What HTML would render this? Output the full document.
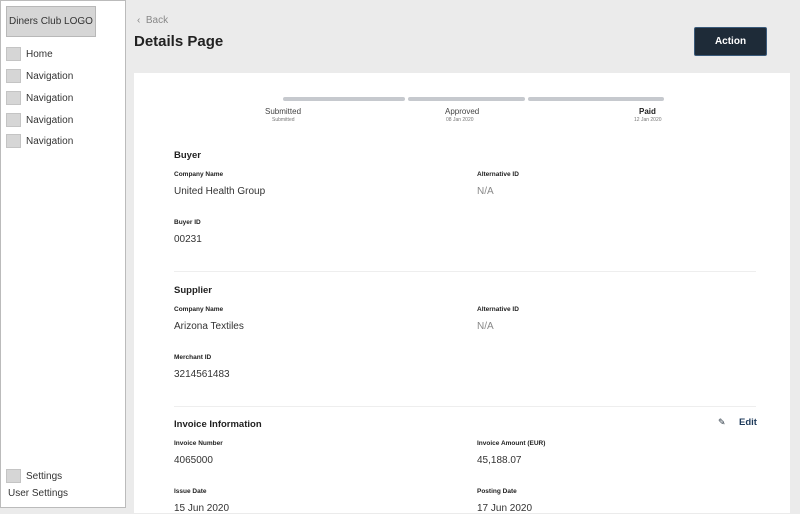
<!DOCTYPE html>
<html><head><style>
*{margin:0;padding:0;box-sizing:border-box}
body{width:800px;height:508px;overflow:hidden;background:#ebebeb;font-family:"Liberation Sans",sans-serif;color:#222;position:relative}
.sb{position:absolute;left:0;top:0;width:126px;height:508px;background:#fff;border:1px solid #bbb}
.logo{position:absolute;left:5px;top:5px;width:90px;height:31px;background:#d6d6d6;border:1px solid #b8b8b8;font-size:10px;text-align:center;line-height:29px;color:#333}
.nav{position:absolute;left:5px;font-size:10px;color:#333;display:flex;align-items:center}
.nav i{display:inline-block;width:15px;height:14px;background:#d6d6d6;border:1px solid #c4c4c4;margin-right:5px}
.abs{position:absolute}
.card{position:absolute;left:134px;top:73px;width:656px;height:440px;background:#fff}
.lbl{position:absolute;font-size:6.5px;font-weight:bold;color:#222}
.val{position:absolute;font-size:10px;color:#333}
.h{position:absolute;font-size:9.5px;font-weight:bold}
.hr{position:absolute;left:40px;width:582px;height:1px;background:#eee}
.seg{position:absolute;top:24px;height:4px;background:#c6c9ce;border-radius:2px}
.in{position:absolute;left:0;top:1px;width:100%;height:100%}
</style></head><body>
<div class="sb">
<div class="logo">Diners Club LOGO</div>
<div class="nav" style="top:46px"><i></i>Home</div>
<div class="nav" style="top:68px"><i></i>Navigation</div>
<div class="nav" style="top:90px"><i></i>Navigation</div>
<div class="nav" style="top:112px"><i></i>Navigation</div>
<div class="nav" style="top:133px"><i></i>Navigation</div>
<div class="nav" style="top:468px"><i></i>Settings</div>
<div class="abs" style="left:7px;top:487px;font-size:10px;color:#333">User Settings</div>
</div>
<div class="abs" style="left:137px;top:15px;font-size:10px;color:#888">‹&nbsp; Back</div>
<div class="abs" style="left:134px;top:33px;font-size:15px;font-weight:bold">Details Page</div>
<div class="abs" style="left:694px;top:27px;width:73px;height:29px;background:#1e2b38;border:1px solid #3a5a7a;border-radius:2px;color:#fff;font-size:10px;font-weight:bold;text-align:center;line-height:27px">Action</div>
<div class="card"><div class="in">
<div class="seg" style="left:149px;width:122px;top:23px"></div>
<div class="seg" style="left:274px;width:117px;top:23px"></div>
<div class="seg" style="left:394px;width:136px;top:23px"></div>
<div class="abs" style="left:131px;top:33px;font-size:8px;color:#444">Submitted</div>
<div class="abs" style="left:138px;top:43px;font-size:5px;color:#777">Submitted</div>
<div class="abs" style="left:311px;top:33px;font-size:8px;color:#444">Approved</div>
<div class="abs" style="left:312px;top:43px;font-size:5px;color:#777">08 Jan 2020</div>
<div class="abs" style="left:505px;top:33px;font-size:8px;font-weight:bold">Paid</div>
<div class="abs" style="left:500px;top:43px;font-size:5px;color:#777">12 Jan 2020</div>

<div class="h" style="left:40px;top:76px">Buyer</div>
<div class="lbl" style="left:40px;top:97px">Company Name</div>
<div class="val" style="left:40px;top:112px">United Health Group</div>
<div class="lbl" style="left:343px;top:97px">Alternative ID</div>
<div class="val" style="left:343px;top:112px;color:#888">N/A</div>
<div class="lbl" style="left:40px;top:145px">Buyer ID</div>
<div class="val" style="left:40px;top:160px">00231</div>
<div class="hr" style="top:197px"></div>

<div class="h" style="left:40px;top:211px">Supplier</div>
<div class="lbl" style="left:40px;top:232px">Company Name</div>
<div class="val" style="left:40px;top:247px">Arizona Textiles</div>
<div class="lbl" style="left:343px;top:232px">Alternative ID</div>
<div class="val" style="left:343px;top:247px;color:#888">N/A</div>
<div class="lbl" style="left:40px;top:280px">Merchant ID</div>
<div class="val" style="left:40px;top:295px">3214561483</div>
<div class="hr" style="top:332px"></div>

<div class="h" style="left:40px;top:345px">Invoice Information</div>
<div class="abs" style="left:584px;top:343px;font-size:9px;color:#1e2b38">✎</div>
<div class="abs" style="left:605px;top:343px;font-size:9.5px;font-weight:bold;color:#1e3a5a">Edit</div>
<div class="lbl" style="left:40px;top:366px">Invoice Number</div>
<div class="val" style="left:40px;top:381px">4065000</div>
<div class="lbl" style="left:343px;top:366px">Invoice Amount (EUR)</div>
<div class="val" style="left:343px;top:381px">45,188.07</div>
<div class="lbl" style="left:40px;top:414px">Issue Date</div>
<div class="val" style="left:40px;top:429px">15 Jun 2020</div>
<div class="lbl" style="left:343px;top:414px">Posting Date</div>
<div class="val" style="left:343px;top:429px">17 Jun 2020</div>
</div></div>
</body></html>
